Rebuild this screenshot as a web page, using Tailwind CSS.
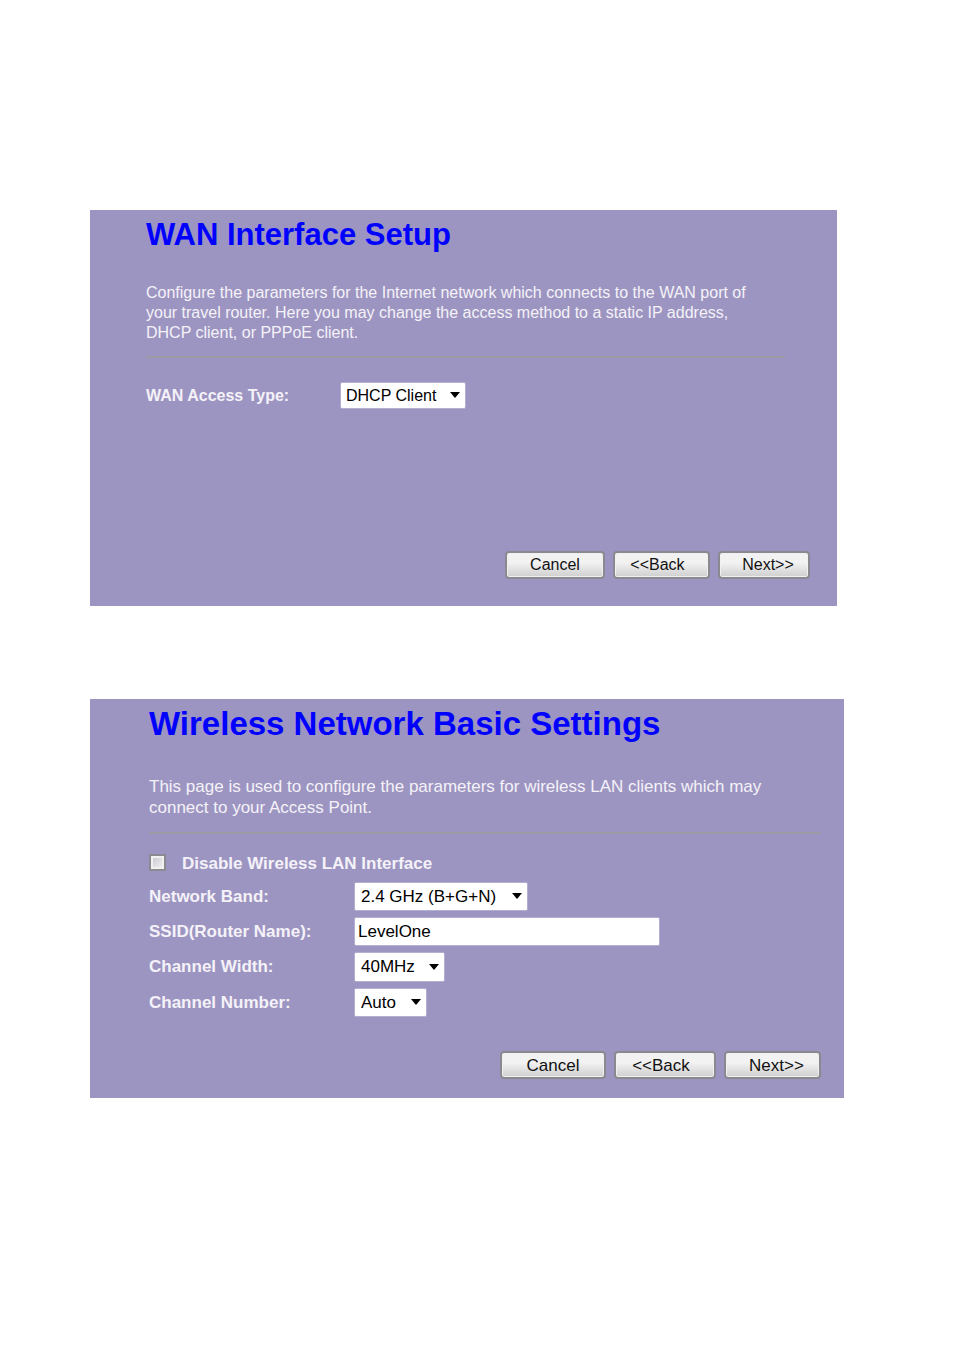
<!doctype html>
<html lang="en">
  <head>
    <meta charset="UTF-8" />
    <meta name="viewport" content="width=device-width, initial-scale=1.0" />
    <script src="https://cdn.jsdelivr.net/npm/@tailwindcss/browser@4"></script>
    <title>Router Setup</title>
  </head>
  <body class="bg-white font-['Liberation_Sans',Arial,sans-serif] text-[#f4f2f8]">
    <main class="flex flex-col gap-[93px] pt-[210px] pb-[252px] pl-[90px]">
      <form class="mr-[117px] bg-[#9d95c1] pr-[27px] pb-[27px] pl-14 text-base">
        <h1 class="text-[31px] leading-[50px] font-bold text-[#0000ff]">WAN Interface Setup</h1>
        <p class="mt-[23px] leading-5">
          Configure the parameters for the Internet network which connects to the WAN port of<br />
          your travel router. Here you may change the access method to a static IP address,<br />
          DHCP client, or PPPoE client.
        </p>
        <hr class="mt-[13px] mr-[25px] border-t-2 border-[#9b99a3]" />
        <div class="mt-6 flex items-center">
          <label for="wan-type" class="w-[194px] font-bold">WAN Access Type:</label>
          <div class="relative text-black">
            <select id="wan-type" class="block h-[27px] w-[126px] appearance-none rounded-xs border border-[#b4aed0] bg-white pl-[5px]">
              <option>DHCP Client</option>
            </select>
            <svg class="pointer-events-none absolute top-[10px] right-[6px] h-[6px] w-[10px]" viewBox="0 0 10 6"><path d="M0 0h10L5 6z" /></svg>
          </div>
        </div>
        <div class="mt-[142px] flex justify-end gap-2 text-[#111]">
          <button type="button" class="h-7 w-[100px] rounded-[4px] border-2 border-[#8b898f] bg-linear-to-b from-[#f2f2f2] from-40% to-[#cfcfcf] to-100% shadow-[inset_0_0_0_1px_#f0f0f0]">Cancel</button>
          <button type="button" class="h-7 w-[97px] rounded-[4px] border-2 border-[#8b898f] bg-linear-to-b from-[#f2f2f2] from-40% to-[#cfcfcf] to-100% pr-2 shadow-[inset_0_0_0_1px_#f0f0f0]">&lt;&lt;Back</button>
          <button type="submit" class="h-7 w-[92px] rounded-[4px] border-2 border-[#8b898f] bg-linear-to-b from-[#f2f2f2] from-40% to-[#cfcfcf] to-100% pl-2 shadow-[inset_0_0_0_1px_#f0f0f0]">Next&gt;&gt;</button>
        </div>
      </form>

      <form class="mr-[110px] bg-[#9d95c1] pr-[23px] pb-[19px] pl-[59px] text-[17px]">
        <h1 class="text-[33px] leading-[50px] font-bold text-[#0000ff]">Wireless Network Basic Settings</h1>
        <p class="mt-[27px] leading-[21px]">
          This page is used to configure the parameters for wireless LAN clients which may<br />
          connect to your Access Point.
        </p>
        <hr class="mt-3.5 border-t-2 border-[#9b99a3]" />
        <div class="mt-5 flex h-[22px] items-start gap-4">
          <input id="disable-wlan" type="checkbox" class="size-[17px] appearance-none border-2 border-[#8c8a90] bg-linear-to-br from-[#c4c5cd] to-[#f6f6f6] shadow-[inset_0_0_0_2px_#f1f1f1]" />
          <label for="disable-wlan" class="leading-5 font-bold">Disable Wireless LAN Interface</label>
        </div>
        <div class="mt-1.5 grid grid-cols-[205px_1fr] items-center gap-y-1.5">
          <label for="band" class="font-bold">Network Band:</label>
          <div class="relative w-[174px] text-black">
            <select id="band" class="block h-[29px] w-full appearance-none rounded-xs border border-[#b4aed0] bg-white pl-1.5">
              <option>2.4 GHz (B+G+N)</option>
            </select>
            <svg class="pointer-events-none absolute top-[11px] right-[6px] h-[6px] w-[10px]" viewBox="0 0 10 6"><path d="M0 0h10L5 6z" /></svg>
          </div>
          <label for="ssid" class="font-bold">SSID(Router Name):</label>
          <input id="ssid" type="text" value="LevelOne" class="h-[29px] w-[306px] rounded-xs border border-[#b4aed0] bg-white pl-[3px] text-black" />
          <label for="width" class="font-bold">Channel Width:</label>
          <div class="relative w-[91px] text-black">
            <select id="width" class="block h-[30px] w-full appearance-none rounded-xs border border-[#b4aed0] bg-white pl-1.5">
              <option>40MHz</option>
            </select>
            <svg class="pointer-events-none absolute top-[12px] right-[6px] h-[6px] w-[10px]" viewBox="0 0 10 6"><path d="M0 0h10L5 6z" /></svg>
          </div>
          <label for="number" class="font-bold">Channel Number:</label>
          <div class="relative w-[73px] text-black">
            <select id="number" class="block h-[29px] w-full appearance-none rounded-xs border border-[#b4aed0] bg-white pl-1.5">
              <option>Auto</option>
            </select>
            <svg class="pointer-events-none absolute top-[11px] right-[6px] h-[6px] w-[10px]" viewBox="0 0 10 6"><path d="M0 0h10L5 6z" /></svg>
          </div>
        </div>
        <div class="mt-[34px] flex justify-end gap-2 text-[#111]">
          <button type="button" class="h-7 w-[106px] rounded-[4px] border-2 border-[#8b898f] bg-linear-to-b from-[#f2f2f2] from-40% to-[#cfcfcf] to-100% shadow-[inset_0_0_0_1px_#f0f0f0]">Cancel</button>
          <button type="button" class="h-7 w-[102px] rounded-[4px] border-2 border-[#8b898f] bg-linear-to-b from-[#f2f2f2] from-40% to-[#cfcfcf] to-100% pr-2 shadow-[inset_0_0_0_1px_#f0f0f0]">&lt;&lt;Back</button>
          <button type="submit" class="h-7 w-[97px] rounded-[4px] border-2 border-[#8b898f] bg-linear-to-b from-[#f2f2f2] from-40% to-[#cfcfcf] to-100% pl-2 shadow-[inset_0_0_0_1px_#f0f0f0]">Next&gt;&gt;</button>
        </div>
      </form>
    </main>
  </body>
</html>
